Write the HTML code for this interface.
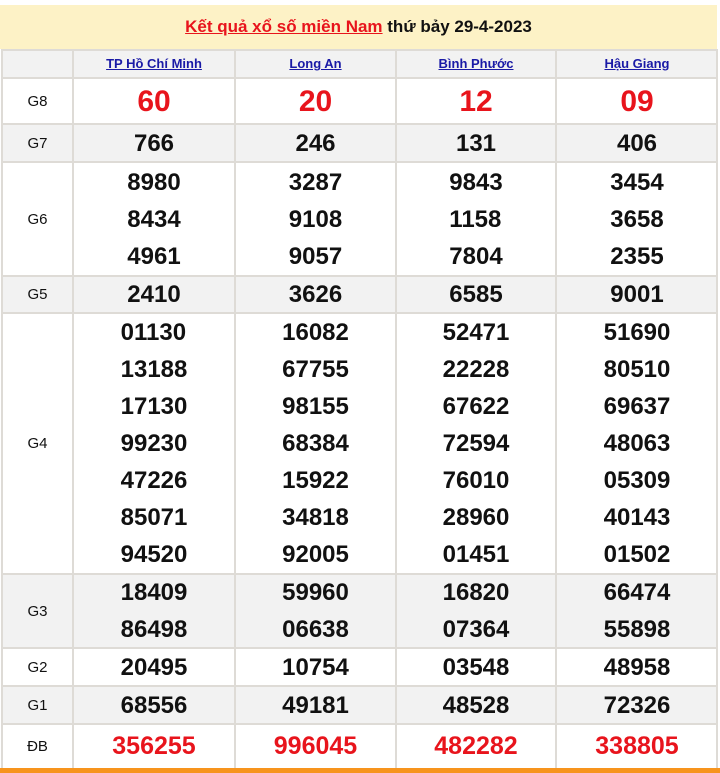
<!DOCTYPE html>
<html><head><meta charset="utf-8"><style>
body{margin:0;background:#fff;width:720px;height:773px;overflow:hidden;font-family:"Liberation Sans",Arial,sans-serif;position:relative}
.hd{position:absolute;left:0;top:5px;width:717px;height:44px;background:#fdf2c6;text-align:center;line-height:44px;font-size:17px;font-weight:bold;color:#111}
.hd a{color:#e8141c;text-decoration:underline}
.row{position:absolute;left:2px;width:716px;border-top:2px solid #dedbd6;box-sizing:border-box}
.g{background:#f2f2f2}
.c{position:absolute;top:0;bottom:0;display:flex;flex-direction:column;justify-content:center;align-items:center;font-weight:bold;font-size:24px;color:#111;line-height:37px}
.c0{left:0;width:71px;font-weight:normal;font-size:15px}
.c1{left:71px;width:162px}.c2{left:233px;width:161px}.c3{left:394px;width:160px}.c4{left:554px;width:162px}
.th .c{font-size:13px;line-height:20px}
.th a{color:#1a1aa6;text-decoration:underline}
.r{color:#e8141c}
.big .c{font-size:30px}
.db .c{font-size:25px}
.v{position:absolute;top:49px;height:719px;width:2px;background:#dedbd6}
.bar{position:absolute;left:0;top:768px;width:720px;height:5px;background:#f7941d}
</style></head><body>
<div class="hd"><a>Kết quả xổ số miền Nam</a> thứ bảy 29-4-2023</div>
<div class="row g th" style="top:49px;height:28px"><div class="c c0"></div><div class="c c1"><a>TP Hồ Chí Minh</a></div><div class="c c2"><a>Long An</a></div><div class="c c3"><a>Bình Phước</a></div><div class="c c4"><a>Hậu Giang</a></div></div>
<div class="row big" style="top:77px;height:46px"><div class="c c0" style="font-size:15px">G8</div><div class="c c1 r">60</div><div class="c c2 r">20</div><div class="c c3 r">12</div><div class="c c4 r">09</div></div>
<div class="row g" style="top:123px;height:38px"><div class="c c0">G7</div><div class="c c1">766</div><div class="c c2">246</div><div class="c c3">131</div><div class="c c4">406</div></div>
<div class="row" style="top:161px;height:114px"><div class="c c0">G6</div><div class="c c1">8980<br>8434<br>4961</div><div class="c c2">3287<br>9108<br>9057</div><div class="c c3">9843<br>1158<br>7804</div><div class="c c4">3454<br>3658<br>2355</div></div>
<div class="row g" style="top:275px;height:37px"><div class="c c0">G5</div><div class="c c1">2410</div><div class="c c2">3626</div><div class="c c3">6585</div><div class="c c4">9001</div></div>
<div class="row" style="top:312px;height:261px"><div class="c c0">G4</div><div class="c c1">01130<br>13188<br>17130<br>99230<br>47226<br>85071<br>94520</div><div class="c c2">16082<br>67755<br>98155<br>68384<br>15922<br>34818<br>92005</div><div class="c c3">52471<br>22228<br>67622<br>72594<br>76010<br>28960<br>01451</div><div class="c c4">51690<br>80510<br>69637<br>48063<br>05309<br>40143<br>01502</div></div>
<div class="row g" style="top:573px;height:74px"><div class="c c0">G3</div><div class="c c1">18409<br>86498</div><div class="c c2">59960<br>06638</div><div class="c c3">16820<br>07364</div><div class="c c4">66474<br>55898</div></div>
<div class="row" style="top:647px;height:38px"><div class="c c0">G2</div><div class="c c1">20495</div><div class="c c2">10754</div><div class="c c3">03548</div><div class="c c4">48958</div></div>
<div class="row g" style="top:685px;height:38px"><div class="c c0">G1</div><div class="c c1">68556</div><div class="c c2">49181</div><div class="c c3">48528</div><div class="c c4">72326</div></div>
<div class="row db" style="top:723px;height:45px"><div class="c c0" style="font-size:15px">ĐB</div><div class="c c1 r">356255</div><div class="c c2 r">996045</div><div class="c c3 r">482282</div><div class="c c4 r">338805</div></div>
<div class="v" style="left:1px"></div><div class="v" style="left:72px"></div><div class="v" style="left:234px"></div><div class="v" style="left:395px"></div><div class="v" style="left:555px"></div><div class="v" style="left:716px"></div>
<div class="bar"></div>
</body></html>
